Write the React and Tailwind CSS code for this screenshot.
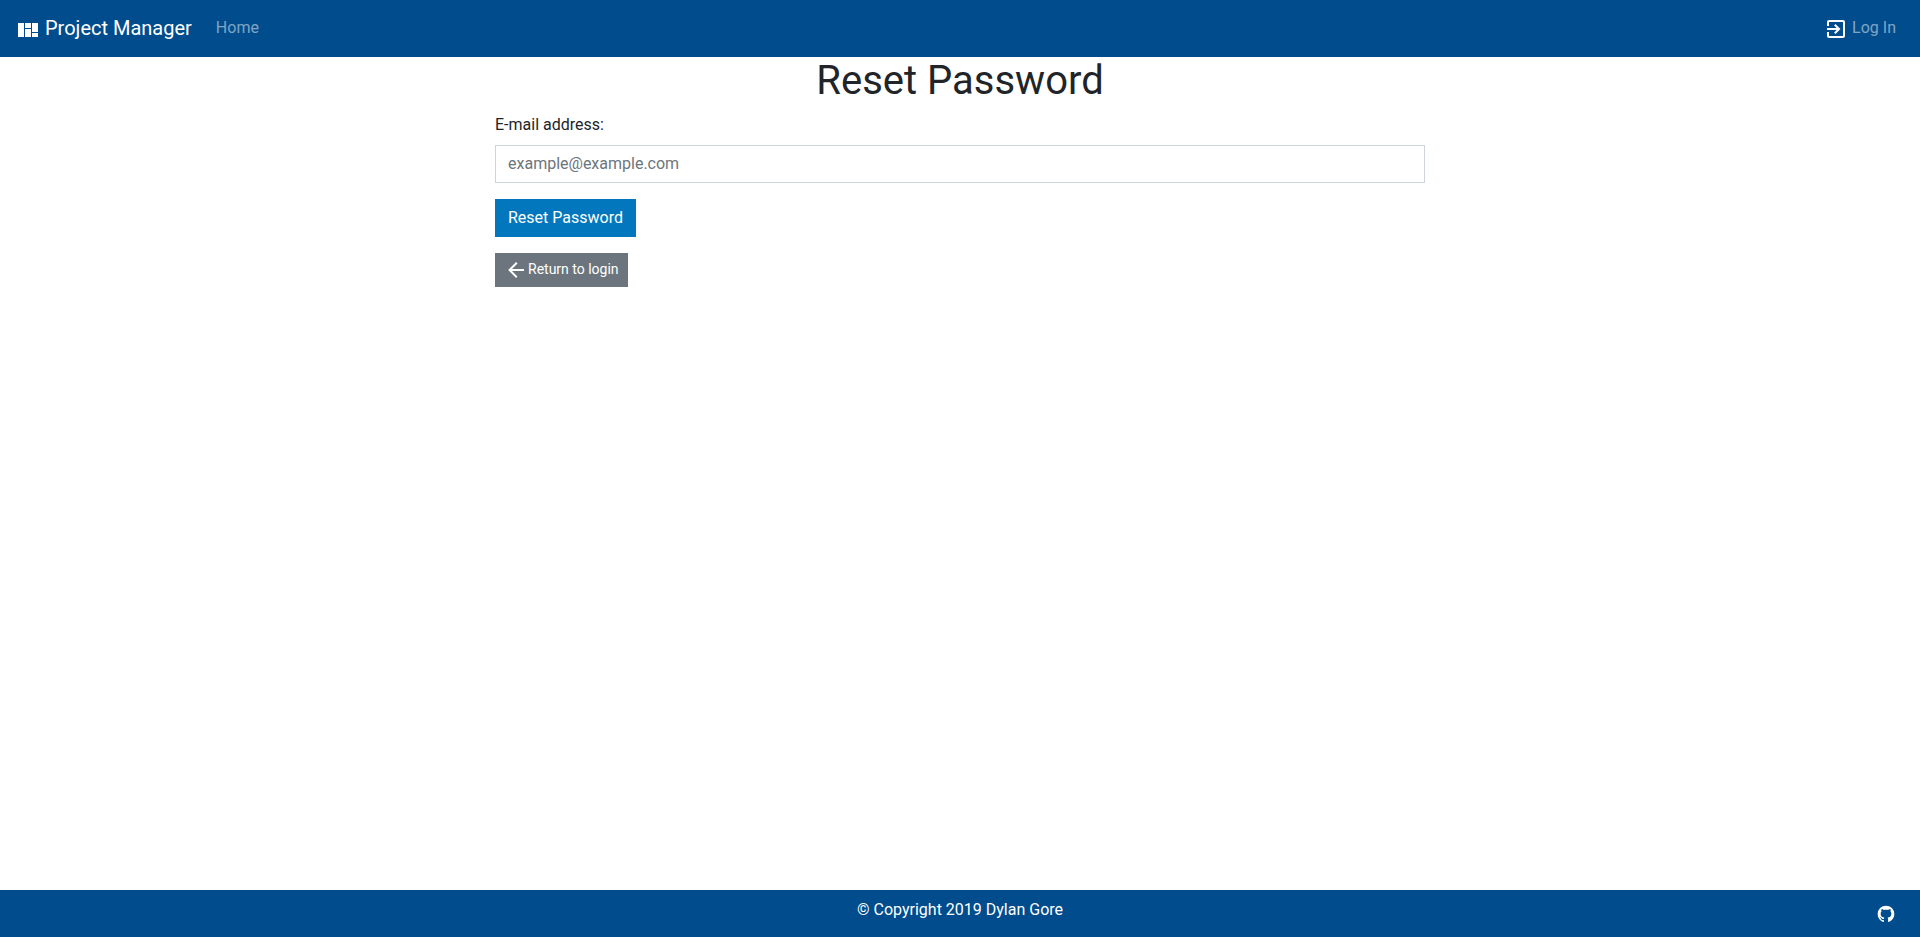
function Icon({ path, className }) {
  return (
    <svg viewBox="0 0 24 24" fill="currentColor" aria-hidden="true" className={className}>
      <path d={path} />
    </svg>
  );
}

const dashboard =
  "M2,5V19H8V5H2M9,5V10H15V5H9M16,5V14H22V5H16M9,11V19H15V11H9M16,15V19H22V15H16Z";
const login =
  "M19,3H5C3.89,3 3,3.89 3,5V9H5V5H19V19H5V15H3V19A2,2 0 0,0 5,21H19A2,2 0 0,0 21,19V5C21,3.89 20.1,3 19,3M10.08,15.58L11.5,17L16.5,12L11.5,7L10.08,8.41L12.67,11H3V13H12.67L10.08,15.58Z";
const arrowLeft =
  "M20,11V13H8L13.5,18.5L12.08,19.92L4.16,12L12.08,4.08L13.5,5.5L8,11H20Z";
const github =
  "M12,2A10,10 0 0,0 2,12C2,16.42 4.87,20.17 8.84,21.5C9.34,21.58 9.5,21.27 9.5,21C9.5,20.77 9.5,20.14 9.5,19.31C6.73,19.91 6.14,17.97 6.14,17.97C5.68,16.81 5.03,16.5 5.03,16.5C4.12,15.88 5.1,15.9 5.1,15.9C6.1,15.97 6.63,16.93 6.63,16.93C7.5,18.45 8.97,18 9.54,17.76C9.63,17.11 9.89,16.67 10.17,16.42C7.95,16.17 5.62,15.31 5.62,11.5C5.62,10.39 6,9.5 6.65,8.79C6.55,8.54 6.2,7.5 6.75,6.15C6.75,6.15 7.59,5.88 9.5,7.17C10.29,6.95 11.15,6.84 12,6.84C12.85,6.84 13.71,6.95 14.5,7.17C16.41,5.88 17.25,6.15 17.25,6.15C17.8,7.5 17.45,8.54 17.35,8.79C18,9.5 18.38,10.39 18.38,11.5C18.38,15.32 16.04,16.16 13.81,16.41C14.17,16.72 14.5,17.33 14.5,18.26C14.5,19.6 14.5,20.68 14.5,21C14.5,21.27 14.66,21.59 15.17,21.5C19.14,20.16 22,16.42 22,12A10,10 0 0,0 12,2Z";

export default function App() {
  return (
    <div className="flex min-h-screen flex-col bg-white font-[Roboto,sans-serif] text-base leading-6 text-[#212529]">
      <nav className="flex h-[57px] items-center bg-[#004c8c] px-4 pb-0.5 text-white">
        <a href="#" className="mr-4 flex items-center gap-[5px] text-xl leading-8">
          <Icon path={dashboard} className="mt-1 size-6" />
          Project Manager
        </a>
        <a href="#" className="px-2 text-white/50">Home</a>
        <a href="#" className="ml-auto flex items-center gap-1 px-2 text-white/50">
          <Icon path={login} className="mt-0.5 size-6 text-white" />
          Log In
        </a>
      </nav>

      <main className="mx-auto w-1/2 grow px-[15px]">
        <h1 className="mb-2 text-center text-[40px] leading-12">Reset Password</h1>
        <form className="mb-4" onSubmit={(e) => e.preventDefault()}>
          <label htmlFor="email" className="mb-2 block">E-mail address:</label>
          <input
            id="email"
            type="email"
            placeholder="example@example.com"
            className="mb-4 block h-[38px] w-full border border-[#ced4da] bg-white px-3 pb-0.5 placeholder:text-[#6c757d]"
          />
          <button type="submit" className="block h-[38px] bg-[#0277bd] px-[13px] text-white">
            Reset Password
          </button>
        </form>
        <a href="#" className="inline-flex h-[34px] items-center bg-[#6c757d] px-[9px] text-sm text-white">
          <Icon path={arrowLeft} className="size-6" />
          <span className="pb-0.5">Return to login</span>
        </a>
      </main>

      <footer className="grid h-[47px] grid-cols-[1fr_auto_1fr] bg-[#004c8c] px-6 text-white">
        <p className="col-start-2 pt-2">© Copyright 2019 Dylan Gore</p>
        <a href="#" aria-label="GitHub" className="self-center justify-self-end">
          <Icon path={github} className="size-5" />
        </a>
      </footer>
    </div>
  );
}
